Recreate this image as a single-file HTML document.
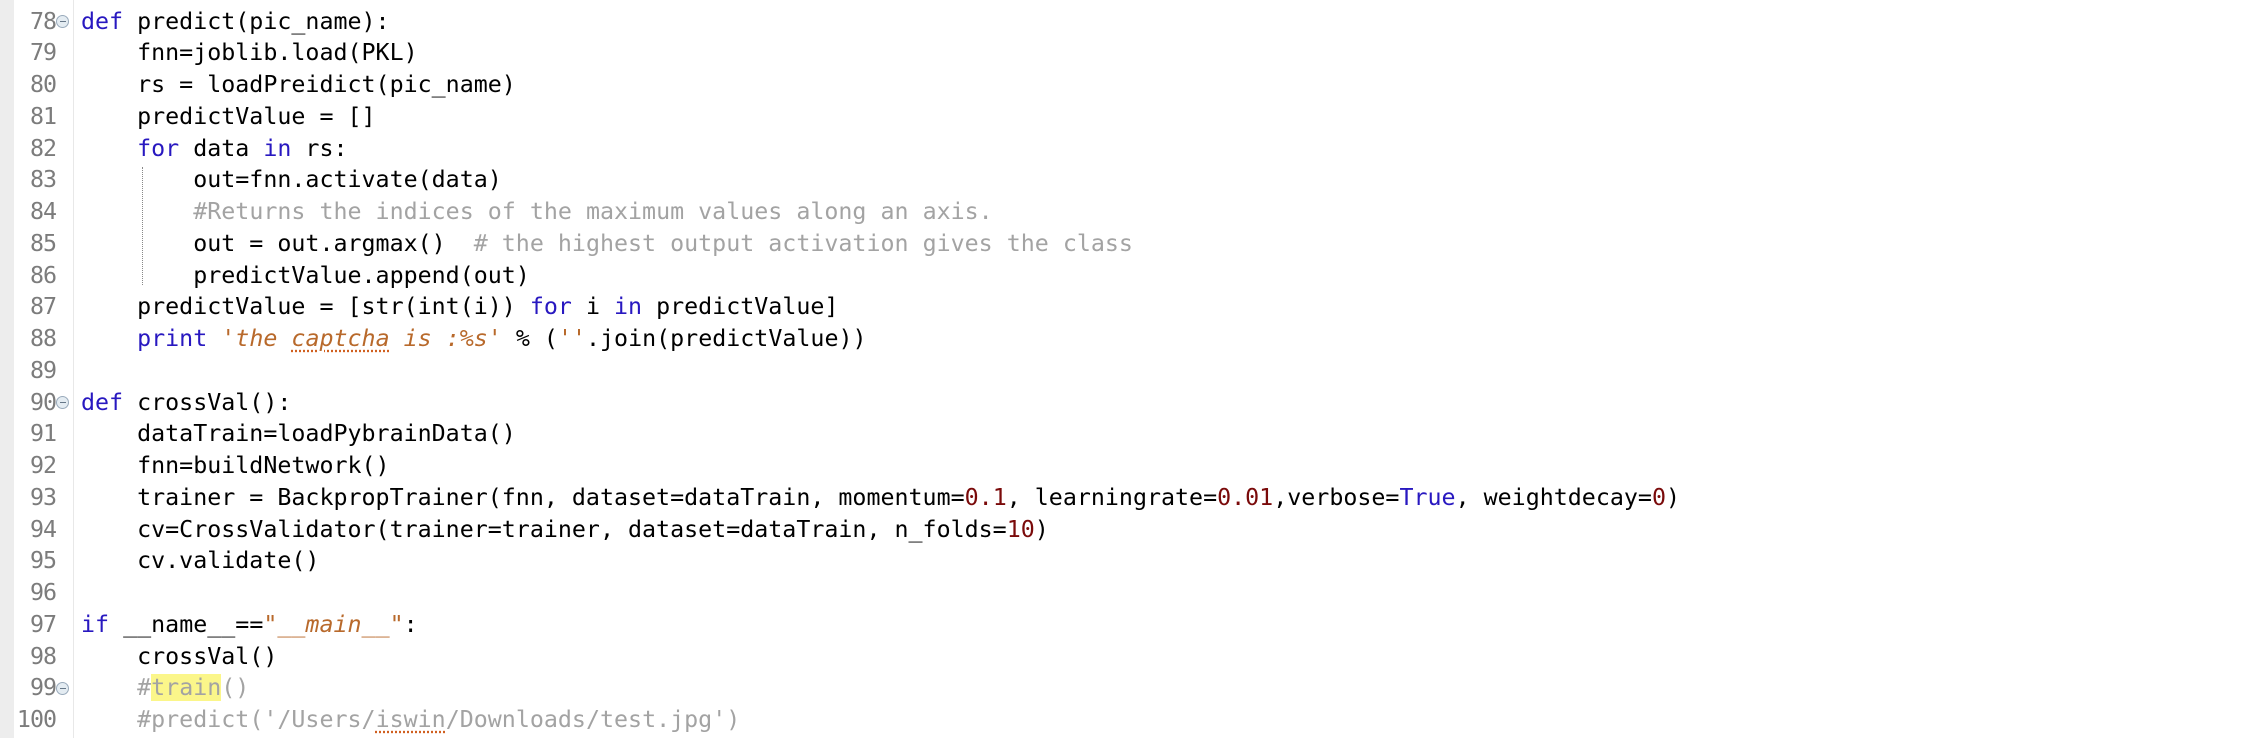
<!DOCTYPE html>
<html><head><meta charset="utf-8"><style>
html,body{margin:0;padding:0;background:#fff;width:2254px;height:738px;overflow:hidden}
.strip{position:absolute;left:0;top:0;width:14px;height:738px;background:#ededed}
.sep{position:absolute;left:73px;top:0;width:1px;height:738px;background:#e8e8e8}
.ln{position:absolute;left:0;width:56px;text-align:right;font:23.3px "DejaVu Sans Mono","Liberation Mono",monospace;color:#7c7c7c;height:31.75px;line-height:31.75px;letter-spacing:-1px}
.code{position:absolute;left:81px;top:5.5px;font:23.3px "DejaVu Sans Mono","Liberation Mono",monospace;color:#000;white-space:pre;line-height:31.75px}
.k{color:#2818c0}.s{color:#b8692b;font-style:italic}.c{color:#a3a3a3}.n{color:#7a0a0a}
.u{text-decoration:underline dotted #d06020;text-underline-offset:4px}
.hl{background:#fbf68a}
.fold{position:absolute;left:56px;width:13px;height:13px;border:1px solid #9ab;border-radius:50%;background:#e4ecf2;box-sizing:border-box}
.fold:after{content:"";position:absolute;left:2.5px;top:5px;width:6px;height:1.5px;background:#678}
.guide{position:absolute;left:142px;top:167px;height:118px;border-left:1.5px dotted #888}
</style></head><body>
<div class="strip"></div><div class="sep"></div>
<div class="guide"></div>
<div style="position:absolute;top:5.5px;left:0">
<div class="ln" style="top:0">78</div><div class="ln" style="top:31.75px">79</div><div class="ln" style="top:63.5px">80</div><div class="ln" style="top:95.25px">81</div><div class="ln" style="top:127px">82</div><div class="ln" style="top:158.75px">83</div><div class="ln" style="top:190.5px">84</div><div class="ln" style="top:222.25px">85</div><div class="ln" style="top:254px">86</div><div class="ln" style="top:285.75px">87</div><div class="ln" style="top:317.5px">88</div><div class="ln" style="top:349.25px">89</div><div class="ln" style="top:381px">90</div><div class="ln" style="top:412.75px">91</div><div class="ln" style="top:444.5px">92</div><div class="ln" style="top:476.25px">93</div><div class="ln" style="top:508px">94</div><div class="ln" style="top:539.75px">95</div><div class="ln" style="top:571.5px">96</div><div class="ln" style="top:603.25px">97</div><div class="ln" style="top:635px">98</div><div class="ln" style="top:666.75px">99</div><div class="ln" style="top:698.5px">100</div>
<div class="fold" style="top:9px"></div><div class="fold" style="top:390px"></div><div class="fold" style="top:676px"></div>
</div>
<div class="code"><span class="k">def</span> predict(pic_name):
    fnn=joblib.load(PKL)
    rs = loadPreidict(pic_name)
    predictValue = []
    <span class="k">for</span> data <span class="k">in</span> rs:
        out=fnn.activate(data)
        <span class="c">#Returns the indices of the maximum values along an axis.</span>
        out = out.argmax()  <span class="c"># the highest output activation gives the class</span>
        predictValue.append(out)
    predictValue = [str(int(i)) <span class="k">for</span> i <span class="k">in</span> predictValue]
    <span class="k">print</span> <span class="s">'the <span class="u">captcha</span> is :%s'</span> % (<span class="s">''</span>.join(predictValue))

<span class="k">def</span> crossVal():
    dataTrain=loadPybrainData()
    fnn=buildNetwork()
    trainer = BackpropTrainer(fnn, dataset=dataTrain, momentum=<span class="n">0.1</span>, learningrate=<span class="n">0.01</span>,verbose=<span class="k">True</span>, weightdecay=<span class="n">0</span>)
    cv=CrossValidator(trainer=trainer, dataset=dataTrain, n_folds=<span class="n">10</span>)
    cv.validate()

<span class="k">if</span> __name__==<span class="s">"__main__"</span>:
    crossVal()
    <span class="c">#<span class="hl">train</span>()</span>
    <span class="c">#predict('/Users/<span class="u">iswin</span>/Downloads/test.jpg')</span></div>
</body></html>
